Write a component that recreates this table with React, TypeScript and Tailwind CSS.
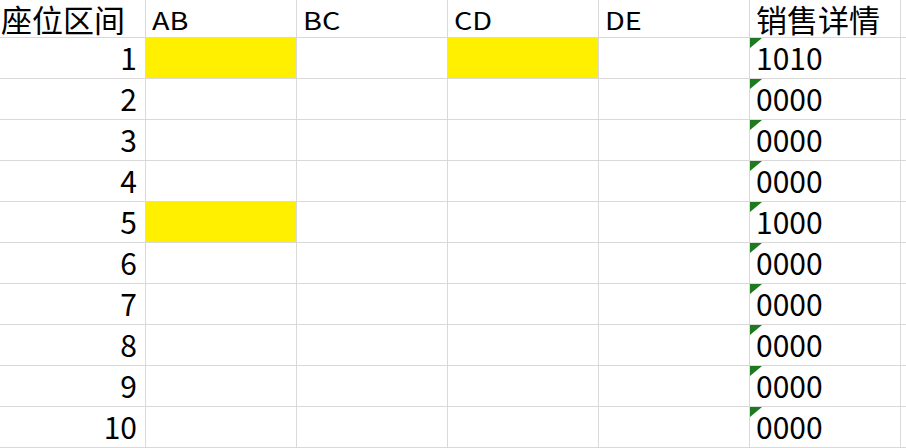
import React from "react";

const headers = ["AB", "BC", "CD", "DE"];

// fill: indexes of the AB..DE columns highlighted yellow
const rows = [
  { n: 1, fill: [0, 2], detail: "1010" },
  { n: 2, fill: [], detail: "0000" },
  { n: 3, fill: [], detail: "0000" },
  { n: 4, fill: [], detail: "0000" },
  { n: 5, fill: [0], detail: "1000" },
  { n: 6, fill: [], detail: "0000" },
  { n: 7, fill: [], detail: "0000" },
  { n: 8, fill: [], detail: "0000" },
  { n: 9, fill: [], detail: "0000" },
  { n: 10, fill: [], detail: "0000" },
];

const cell = "border-r border-b border-[#d9d9d9]";
const font = { fontFamily: '"Noto Sans CJK SC", "Noto Sans", sans-serif' };

export default function App() {
  return (
    <div className="w-[906px] h-[448px] overflow-hidden bg-white text-black" style={font}>
      <div className="grid grid-cols-[146px_151px_151px_151px_151px_151px_1fr] grid-rows-[38px_repeat(10,41px)]">
        {/* header row */}
        <div className={`${cell} flex items-start pl-[1px] pt-[3px] text-[31px] leading-none whitespace-nowrap`}>
          座位区间
        </div>
        {headers.map((h) => (
          <div key={h} className={`${cell} flex items-start pl-[6px] pt-[8px] text-[24px] leading-none`}>
            <span className="inline-block origin-left scale-x-[1.2]">{h}</span>
          </div>
        ))}
        <div className={`${cell} flex items-start pl-[6px] pt-[3px] text-[31px] leading-none whitespace-nowrap`}>
          销售详情
        </div>
        <div className="border-b border-[#d9d9d9]" />

        {rows.map((r) => (
          <React.Fragment key={r.n}>
            <div className={`${cell} flex items-end justify-end pr-[8px] pb-[6px] text-[30px] leading-none`}>
              {r.n}
            </div>
            {headers.map((h, i) => (
              <div key={h} className={`${cell} ${r.fill.includes(i) ? "bg-[#fff000]" : ""}`} />
            ))}
            <div className={`${cell} relative flex items-end pl-[6px] pb-[6px] text-[30px] leading-none`}>
              <span className="absolute left-0 top-0 w-0 h-0 border-t-[10px] border-r-[12px] border-t-[#1e7a1e] border-r-transparent" />
              {r.detail}
            </div>
            <div className="border-b border-[#d9d9d9]" />
          </React.Fragment>
        ))}
      </div>
    </div>
  );
}
